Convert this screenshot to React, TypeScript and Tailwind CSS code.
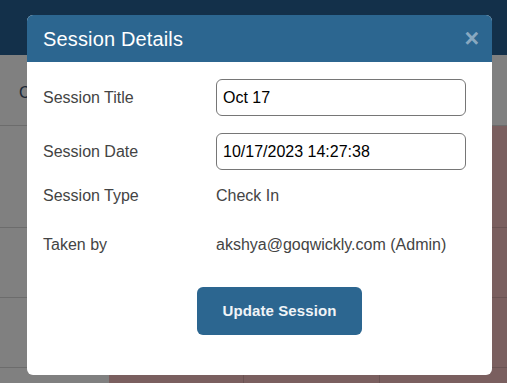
import React from "react";

export default function App() {
  const rows = [
    { label: "Session Title", value: "Oct 17", input: true },
    { label: "Session Date", value: "10/17/2023 14:27:38", input: true },
  ];

  return (
    <div
      className="relative w-[507px] h-[383px] overflow-hidden bg-[#808080]"
      style={{ fontFamily: '"Liberation Sans", Arial, sans-serif' }}
    >
      {/* Page behind the dialog (dimmed) */}
      <div className="h-[55px] bg-[#13304a]" />
      <div className="grid grid-cols-[109px_135px_136px_1fr]">
        <div className="col-span-4 h-[71px] border-b border-[#6c6c6c] px-[19px] pt-[26px] text-[16px] text-[#1b2736]">
          C
        </div>
        {[102, 70, 70].map((h, i) => (
          <React.Fragment key={i}>
            <div className="border-b border-[#6c6c6c]" style={{ height: h }} />
            <div className="col-span-3 border-b border-[#6a5353] bg-[#7a5f5f]" />
          </React.Fragment>
        ))}
        <div className="h-[20px]" />
        <div className="border-r border-[#6a5353] bg-[#7a5f5f]" />
        <div className="border-r border-[#6a5353] bg-[#7a5f5f]" />
        <div className="bg-[#7a5f5f]" />
      </div>

      {/* Dialog */}
      <div className="absolute left-[27px] top-[15px] w-[465px] h-[360px] rounded-[6px] bg-white overflow-hidden">
        <div className="h-[47px] bg-[#2c6690] pl-4 pr-[13px] flex items-center justify-between">
          <h2 className="text-[20px] tracking-[0.15px] text-white leading-none">Session Details</h2>
          <button className="text-[25px] font-bold leading-none text-white/45">×</button>
        </div>

        <div className="px-4 pt-[17px]">
          {rows.map((r, i) => (
            <div key={r.label} className={`flex items-center h-[37px] ${i > 0 ? "mt-[17px]" : ""}`}>
              <span className="w-[173px] text-[16px] text-[#444]">{r.label}</span>
              <input
                readOnly
                value={r.value}
                className="w-[250px] h-[37px] border border-[#767676] rounded-[6px] px-[6px] text-[16px] text-black outline-none"
              />
            </div>
          ))}

          <div className="flex items-center h-[24px] mt-[14px]">
            <span className="w-[173px] text-[16px] text-[#444]">Session Type</span>
            <span className="text-[16px] text-[#444]">Check In</span>
          </div>

          <div className="flex items-center h-[24px] mt-[25px]">
            <span className="w-[173px] text-[16px] text-[#444]">Taken by</span>
            <span className="text-[16px] text-[#444]">akshya@goqwickly.com (Admin)</span>
          </div>

          <button className="mt-[30px] ml-[154px] w-[165px] h-[48px] rounded-[6px] bg-[#2c6690] text-[#f0f4f7] text-[15px] font-bold tracking-[0.1px]">
            Update Session
          </button>
        </div>
      </div>
    </div>
  );
}
